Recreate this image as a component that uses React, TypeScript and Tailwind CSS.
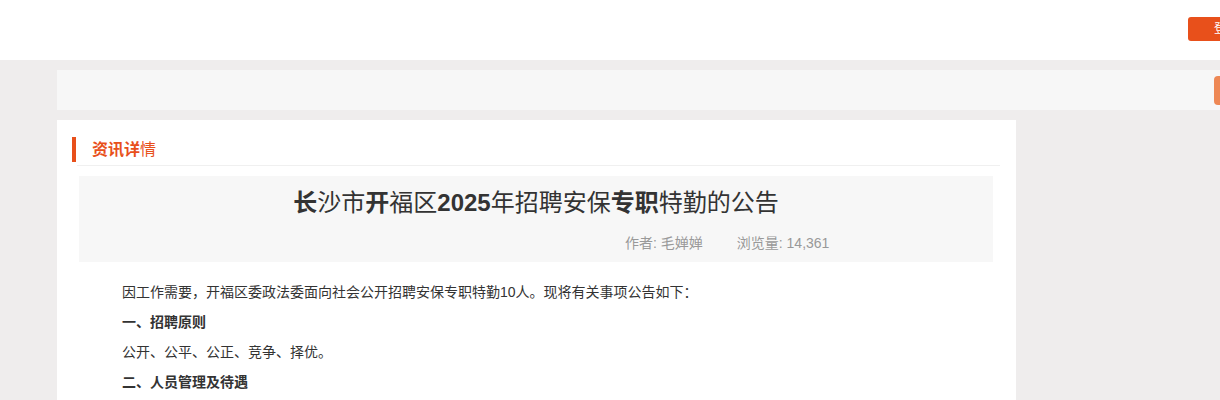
import React from "react";

const font = "font-['Liberation_Sans','Noto_Sans_CJK_SC',sans-serif]";

export default function App() {
  return (
    <div className={`w-[1220px] h-[400px] overflow-hidden bg-[#efeded] ${font}`}>
      {/* header */}
      <div className="h-[60px] bg-white flex items-start pt-[17px] pl-[1188px]">
        <button className="shrink-0 w-[80px] h-[24px] rounded-[3px] bg-[#e8501b] text-white text-[12px] pl-[26px] text-left">
          登录
        </button>
      </div>

      <div className="pl-[57px] pt-[10px]">
        {/* breadcrumb bar */}
        <div className="w-[1200px] h-[40px] bg-[#f7f7f7] flex items-center pl-[1157px]">
          <div className="w-[40px] h-[29px] rounded-[4px] bg-[#ee8855]" />
        </div>

        {/* article card */}
        <div className="mt-[10px] w-[959px] bg-white pt-[17px] pl-[20px] pr-[16px] h-[300px]">
          <div className="relative flex items-center h-[25px] pl-[15px]">
            <span className="absolute -left-[5px] top-0 w-[4px] h-[25px] bg-[#e8501b]" />
            <span className="text-[16px] leading-none text-[#e8501b]">
              <b>资讯详</b>情
            </span>
          </div>
          <div className="mt-[3px] h-px bg-[#f0f0f0]" />

          <div className="mt-[10px] ml-[2px] w-[914px] h-[86px] bg-[#f7f7f7] flex flex-col items-center">
            <h1 className="mt-[13px] text-[24px] leading-[28px] text-[#333]">
              <b>长</b>沙市<b>开</b>福区<b>2025</b>年招聘安保<b>专职</b>特勤的公告
            </h1>
            <div className="mt-[18px] self-start pl-[546px] flex gap-[34px] text-[14px] leading-[16px] text-[#999]">
              <span>作者: 毛婵婵</span>
              <span>浏览量: 14,361</span>
            </div>
          </div>

          <div className="mt-[15px] pl-[45px] text-[14px] leading-[30px] text-[#333]">
            <p>因工作需要，开福区委政法委面向社会公开招聘安保专职特勤10人。现将有关事项公告如下：</p>
            <p className="font-bold">一、招聘原则</p>
            <p>公开、公平、公正、竞争、择优。</p>
            <p className="font-bold">二、人员管理及待遇</p>
          </div>
        </div>
      </div>
    </div>
  );
}
